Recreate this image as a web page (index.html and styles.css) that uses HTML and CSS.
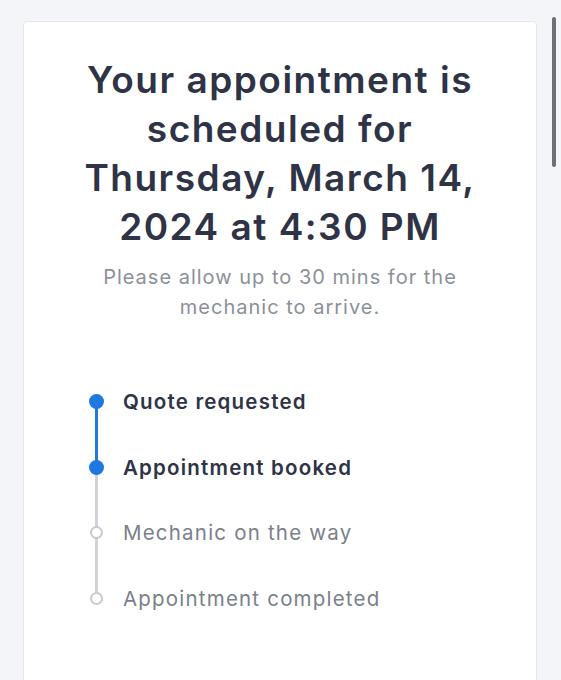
FILE: index.html
```html
<!DOCTYPE html>
<html lang="en">
<head>
    <meta charset="UTF-8">
    <meta name="viewport" content="width=device-width, initial-scale=1.0">
    <title>Appointment</title>
    <link rel="stylesheet" href="styles.css">
</head>
<body>
    <div class="card">
        <h1 class="title">Your appointment is<br>scheduled for<br>Thursday, March 14,<br>2024 at 4:30 PM</h1>
        <p class="note">Please allow up to 30 mins for the<br>mechanic to arrive.</p>

        <!-- progress steps -->
        <ul class="steps">
            <li class="step done link-done"><span class="dot"></span><span class="label">Quote requested</span></li>
            <li class="step done"><span class="dot"></span><span class="label">Appointment booked</span></li>
            <li class="step"><span class="dot"></span><span class="label">Mechanic on the way</span></li>
            <li class="step last"><span class="dot"></span><span class="label">Appointment completed</span></li>
        </ul>
    </div>
    <div class="scrollbar"></div>
</body>
</html>
```

FILE: styles.css
```css
html, body{
    margin: 0;
    padding: 0;
}
body{
    background-color: #f3f5f8;
    font-family: Inter, "Noto Sans", sans-serif;
    overflow: hidden;
}
.card{
    margin: 21px 24px 0 23px;
    min-height: 720px;
    padding: 33px 30px 0;
    background: #fff;
    border: 1px solid #e4e7eb;
    border-radius: 4px;
    box-sizing: border-box;
}
.title{
    margin: 0;
    font-size: 37px;
    line-height: 49px;
    font-weight: 600;
    color: #2e3346;
    text-align: center;
    letter-spacing: 1.5px;
}
.note{
    margin: 11px 0 0;
    font-size: 20px;
    line-height: 30px;
    color: #8b9099;
    text-align: center;
    letter-spacing: 1px;
}
.steps{
    margin: 47px 0 0;
    padding: 0 0 0 35px;
    list-style: none;
}
.step{
    position: relative;
    display: flex;
    align-items: center;
    height: 65.6px;
}
.dot{
    display: flex;
    justify-content: center;
    align-items: center;
    width: 15px;
    height: 15px;
    margin-right: 19px;
    position: relative;
    z-index: 1;
}
.dot::before{
    content: "";
    flex: none;
    width: 9px;
    height: 9px;
    border: 2px solid #c6cad0;
    border-radius: 50%;
    background: #fff;
}
.done .dot::before{
    width: 15px;
    height: 15px;
    border: 0;
    background: #1f77e0;
}
/* connector to next step */
.step::after{
    content: "";
    position: absolute;
    left: 6px;
    top: 33px;
    width: 3px;
    height: 65.6px;
    background: #cfd3d8;
}
.step.link-done::after{
    background: #1f77e0;
}
.step.last::after{
    display: none;
}
.label{
    font-size: 20.5px;
    color: #7b808a;
    letter-spacing: 1.2px;
}
.done .label{
    font-weight: 600;
    color: #2e3346;
}
.scrollbar{
    position: absolute;
    top: 17px;
    left: 552px;
    width: 4px;
    height: 150px;
    border-radius: 2px;
    background: #6f7073;
}
```
